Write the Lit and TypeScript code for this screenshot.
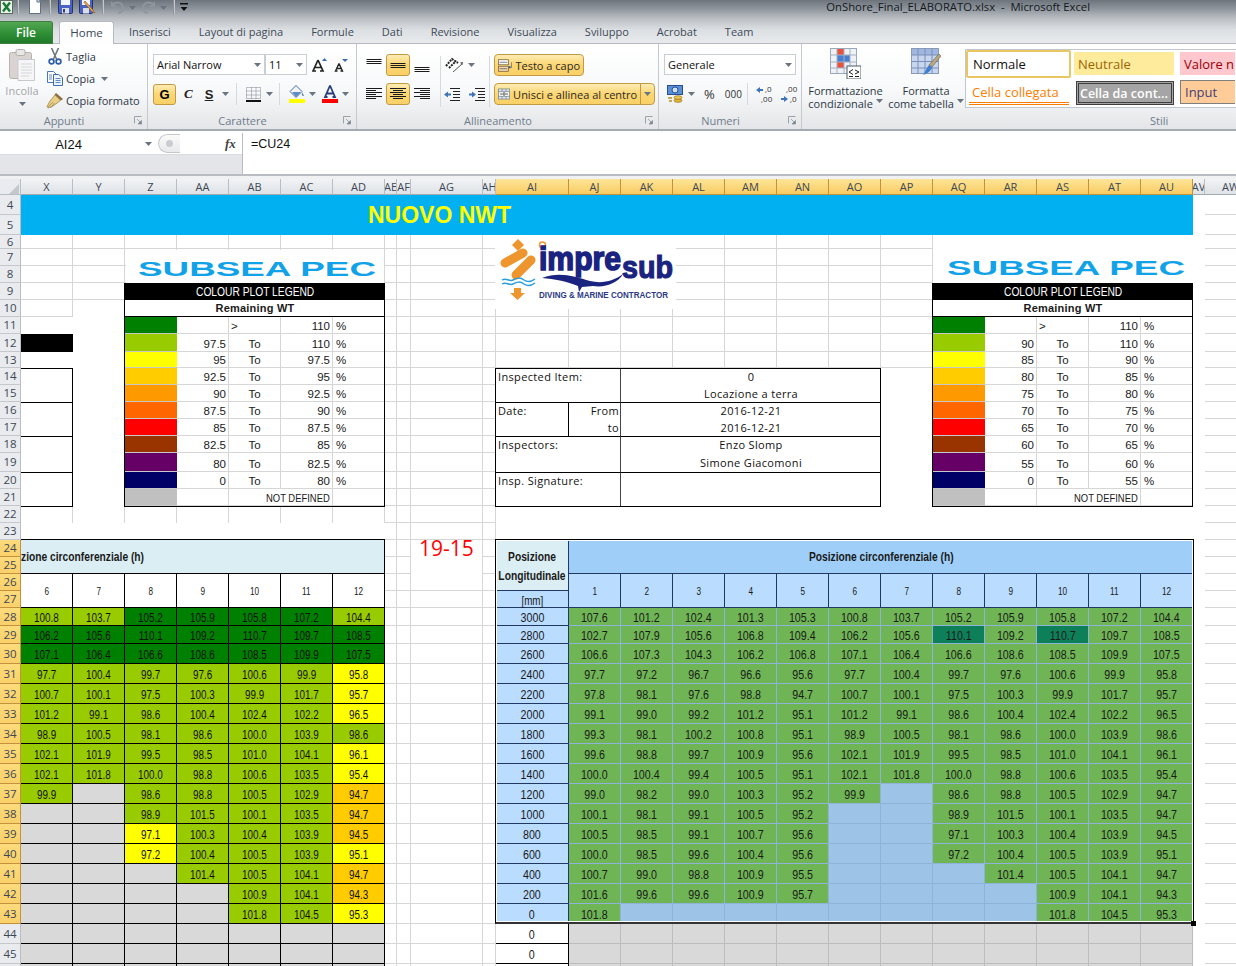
import { LitElement, html, svg, css } from "lit";
import { customElement } from "lit/decorators.js";

const COLS = ["X","Y","Z","AA","AB","AC","AD","AE","AF","AG","AH","AI","AJ","AK","AL","AM","AN","AO","AP","AQ","AR","AS","AT","AU","AV","AW"];
const C: Record<string, number> = {};
COLS.forEach((n, i) => (C[n] = i + 2));
const area = (c1: string, r1: number, c2: string = c1, r2: number = r1) =>
  `grid-area:${r1 - 2}/${C[c1]}/${r2 - 1}/${C[c2] + 1}`;

const LABELS = [3000,2800,2600,2400,2200,2000,1800,1600,1400,1200,1000,800,600,400,200,0];
const _ = "";
const DATA: string[][] = [
  ["107.6","101.2","102.4","101.3","105.3","100.8","103.7","105.2","105.9","105.8","107.2","104.4"],
  ["102.7","107.9","105.6","106.8","109.4","106.2","105.6","110.1","109.2","110.7","109.7","108.5"],
  ["106.6","107.3","104.3","106.2","106.8","107.1","106.4","106.6","108.6","108.5","109.9","107.5"],
  ["97.7","97.2","96.7","96.6","95.6","97.7","100.4","99.7","97.6","100.6","99.9","95.8"],
  ["97.8","98.1","97.6","98.8","94.7","100.7","100.1","97.5","100.3","99.9","101.7","95.7"],
  ["99.1","99.0","99.2","101.2","95.1","101.2","99.1","98.6","100.4","102.4","102.2","96.5"],
  ["99.3","98.1","100.2","100.8","95.1","98.9","100.5","98.1","98.6","100.0","103.9","98.6"],
  ["99.6","98.8","99.7","100.9","95.6","102.1","101.9","99.5","98.5","101.0","104.1","96.1"],
  ["100.0","100.4","99.4","100.5","95.1","102.1","101.8","100.0","98.8","100.6","103.5","95.4"],
  ["99.0","98.2","99.0","100.3","95.2","99.9",_,"98.6","98.8","100.5","102.9","94.7"],
  ["100.1","98.1","99.1","100.5","95.2",_,_,"98.9","101.5","100.1","103.5","94.7"],
  ["100.5","98.5","99.1","100.7","95.6",_,_,"97.1","100.3","100.4","103.9","94.5"],
  ["100.0","98.5","99.6","100.4","95.6",_,_,"97.2","100.4","100.5","103.9","95.1"],
  ["100.7","99.0","98.8","100.9","95.5",_,_,_,"101.4","100.5","104.1","94.7"],
  ["101.6","99.6","99.6","100.9","95.7",_,_,_,_,"100.9","104.1","94.3"],
  ["101.8",_,_,_,_,_,_,_,_,"101.8","104.5","95.3"],
];
const LEGEND_COLORS = ["#008000","#99cc00","#ffff00","#ffcc00","#ff9900","#ff6600","#ff0000","#993300","#660066","#000066","#c0c0c0"];
const LEFT_LEGEND: (number | null)[][] = [[null,110],[97.5,110],[95,97.5],[92.5,95],[90,92.5],[87.5,90],[85,87.5],[82.5,85],[80,82.5],[0,80]];
const RIGHT_LEGEND: (number | null)[][] = [[null,110],[90,110],[85,90],[80,85],[75,80],[70,75],[65,70],[60,65],[55,60],[0,55]];

const heat = (v: string) => {
  const n = parseFloat(v);
  if (n >= 105) return "#008000";
  if (n >= 97.5) return "#99cc00";
  if (n >= 95) return "#ffff00";
  return "#ffcc00";
};

const arrow = html`<svg class="arr" width="7" height="4" viewBox="0 0 7 4"><path d="M0 0h7L3.5 4z" fill="#6a7480"/></svg>`;
const launcher = html`<svg width="9" height="9" viewBox="0 0 9 9"><path d="M.5 .5h7M.5 .5v7" stroke="#9aa3ad" fill="none"/><path d="M3 3l4 4M7.5 4.5v3.5h-3.5z" stroke="#7f8994" fill="#7f8994" stroke-width=".7"/></svg>`;

const aligned = (ys: number[], ws: number[], align: "l" | "c" | "r") => html`<svg width="16" height="16" viewBox="0 0 16 16">${ys.map((y, i) => {
  const w = ws[i];
  const x = align === "l" ? 0 : align === "r" ? 16 - w : (16 - w) / 2;
  return svg`<rect x=${x} y=${y} width=${w} height="1" fill="#1a1a1a"></rect>`;
})}</svg>`;

const icons = {
  excel: html`<svg width="13" height="14" viewBox="0 0 13 14"><rect x=".5" y=".5" width="12" height="13" fill="#eaf4ea" stroke="#5a6a5a"/><path d="M3 2.5l7 9M10 2.5l-7 9" stroke="#1d7a36" stroke-width="2.4"/></svg>`,
  page: html`<svg width="12" height="16" viewBox="0 0 12 16"><path d="M.5 .5H8L11.500 4V15.500H.5z" fill="#fff" stroke="#5f6f86"/><path d="M8 .5V4h3.500" fill="#cfd9e6" stroke="#5f6f86"/></svg>`,
  save: html`<svg width="15" height="16" viewBox="0 0 15 16"><rect x=".5" y=".5" width="14" height="15" rx="1" fill="#4a62c4" stroke="#26336f"/><rect x="3" y="1" width="9" height="6" fill="#f2f5fb"/><rect x="4" y="10" width="7" height="5.500" fill="#d9dde6"/><rect x="5" y="11" width="2" height="3.500" fill="#33406f"/></svg>`,
  saveas: html`<svg width="17" height="16" viewBox="0 0 17 16"><rect x=".5" y=".5" width="13" height="15" rx="1" fill="#4a62c4" stroke="#26336f"/><rect x="3" y="1" width="8" height="6" fill="#f2f5fb"/><rect x="4" y="10" width="6" height="5.500" fill="#d9dde6"/><path d="M6 3l8 9 2 3-3-1.500-8-9z" fill="#e6b34a" stroke="#9a5a2a" stroke-width=".7"/></svg>`,
  undo: html`<svg width="15" height="14" viewBox="0 0 15 14"><path d="M2 5c4-4 10-3 11 2 .5 3-2 6-5 6" fill="none" stroke="#8e959c" stroke-width="2"/><path d="M1 1v6h6z" fill="#8e959c"/></svg>`,
  redo: html`<svg width="15" height="14" viewBox="0 0 15 14"><path d="M13 5C9 1 3 2 2 7c-.5 3 2 6 5 6" fill="none" stroke="#8e959c" stroke-width="2"/><path d="M14 1v6H8z" fill="#8e959c"/></svg>`,
  qat: html`<svg width="8" height="10" viewBox="0 0 8 10"><rect y="1" width="8" height="1.500" fill="#111"/><path d="M.5 5h7L4 9z" fill="#111"/></svg>`,
  clipboard: html`<svg width="26" height="32" viewBox="0 0 26 32"><rect x=".5" y="3.500" width="22" height="26" rx="2" fill="#d9d4d2" stroke="#b7b2b0"/><rect x="7" y=".5" width="9" height="6" rx="1.500" fill="#e9e7e6" stroke="#b3aeac"/><path d="M9 10.500h16.500V31.500H9z" fill="#f6f6f7" stroke="#c6c9ce"/><path d="M12 15h11M12 18h11M12 21h11M12 24h11M12 27h8" stroke="#d2d6db"/></svg>`,
  scissors: html`<svg width="14" height="17" viewBox="0 0 14 17"><path d="M3.500 0l5 11M10.500 0l-5 11" stroke="#6c7681" stroke-width="1.600"/><circle cx="3.500" cy="13.500" r="2.400" fill="none" stroke="#2f5ea8" stroke-width="1.700"/><circle cx="10.500" cy="13.500" r="2.400" fill="none" stroke="#2f5ea8" stroke-width="1.700"/></svg>`,
  copy: html`<svg width="16" height="15" viewBox="0 0 16 15"><path d="M.5 .5h6l3 3v8H.5z" fill="#fff" stroke="#4a78b5"/><path d="M6.500 3.500h5l4 3v8h-9z" fill="#eef4fb" stroke="#3f6dac"/><path d="M8.500 7.500h5M8.500 9.500h5M8.500 11.500h5M2 4h3M2 6h3M2 8h3" stroke="#5f8bc4"/></svg>`,
  brush: html`<svg width="18" height="17" viewBox="0 0 18 17"><path d="M10 1l7 6-2 1.500-6.500-6z" fill="#8a6e3e"/><path d="M9 3l5.500 5.500L7 14 2 16 1 14.500 4 9z" fill="#e8cf84" stroke="#8f7a45" stroke-width=".7"/><path d="M2 15l5-5M4.500 16l4-5" stroke="#a98f4e" stroke-width=".8"/></svg>`,
  bigA: html`<svg width="15" height="15" viewBox="0 0 15 15"><path d="M6 3L1 14h3M6 3l5 11H8M3.200 10.500h5.600" fill="none" stroke="#222" stroke-width="1.700"/><path d="M10 4l2.500-3L15 4z" fill="#3a6cb0"/></svg>`,
  smallA: html`<svg width="14" height="14" viewBox="0 0 14 14"><path d="M5 5.500L1.500 13H3.500M5 5.500L8.500 13H6.500M3 10.500h4" fill="none" stroke="#222" stroke-width="1.400"/><path d="M8 1h6l-3 3z" fill="#3a6cb0"/></svg>`,
  borders: html`<svg width="15" height="15" viewBox="0 0 15 15"><path d="M.5 .5h14v11H.5zM5.500 .5v11M10 .5v11M.5 4h14M.5 8h14" fill="none" stroke="#7d858f" stroke-dasharray="1 1"/><rect y="13" width="15" height="2" fill="#111"/></svg>`,
  fill: html`<svg width="16" height="18" viewBox="0 0 16 18"><path d="M7 .5l6 6-6 6-6-6z" fill="#f2f4f7" stroke="#4a6a9a"/><path d="M3 7h9l-5 5z" fill="#5b8cc8"/><path d="M13 7.500c1.500 2 2 3 1.500 3.500s-2-.5-1.500-3.500z" fill="#4677b7"/><rect y="14" width="16" height="4" fill="#ffff00"/></svg>`,
  colorA: html`<svg width="16" height="18" viewBox="0 0 16 18"><path d="M8 .5L3 12h2.500M8 .5L13 12h-2.500M4.500 8.500h7" fill="none" stroke="#2a3f7a" stroke-width="1.800"/><rect y="14" width="16" height="4" fill="#ff0000"/></svg>`,
  orient: html`<svg width="24" height="16" viewBox="0 0 24 16"><path d="M2 9l6-7 6 4M5 11l7-7" fill="none" stroke="#222" stroke-width="2" stroke-dasharray="2 1"/><path d="M9 15l9-8" stroke="#555"/><path d="M19 5l-3 .5 2.500 2.500z" fill="#555"/></svg>`,
  indentL: html`<svg width="17" height="17" viewBox="0 0 17 17"><path d="M6 2.500h10M9 5.500h7M9 8.500h7M9 11.500h7M6 14.500h10" stroke="#222"/><path d="M0 8.500l4-3v2h3v2H4v2z" fill="#3f74bb"/></svg>`,
  indentR: html`<svg width="17" height="17" viewBox="0 0 17 17"><path d="M7 2.500h10M10 5.500h7M10 8.500h7M10 11.500h7M7 14.500h10" stroke="#222"/><path d="M8 8.500l-4-3v2H1v2h3v2z" fill="#3f74bb"/></svg>`,
  wrap: html`<svg width="20" height="17" viewBox="0 0 20 17"><rect x=".5" y=".5" width="14" height="7" fill="#fbfbfb" stroke="#6d5a3a"/><rect x=".5" y="9.500" width="14" height="7" fill="#f4d6ae" stroke="#6d5a3a"/><path d="M2 4h11M2 13h11" stroke="#555"/><path d="M19 4v7h-3" fill="none" stroke="#35558a"/><path d="M17 9l-3 2 3 2z" fill="#35558a"/></svg>`,
  merge: html`<svg width="18" height="16" viewBox="0 0 18 16"><rect x=".5" y=".5" width="17" height="15" fill="#dfe6ee" stroke="#6b7a8a"/><rect x="2" y="5" width="14" height="6" fill="#fff"/><path d="M.5 4.500h17M.5 11.500h17M6 .5v4M12 .5v4M6 11.500v4M12 11.500v4" stroke="#6b7a8a"/><path d="M3 8h3M15 8h-3" stroke="#111"/><circle cx="9" cy="8" r="1.800" fill="none" stroke="#111"/></svg>`,
  accounting: html`<svg width="17" height="18" viewBox="0 0 17 18"><rect x=".5" y=".5" width="15" height="9" fill="#5a8fd6" stroke="#2a4f90"/><circle cx="8" cy="5" r="3" fill="#cfe0f5" stroke="#2a4f90"/><ellipse cx="11" cy="15.500" rx="4" ry="1.800" fill="#e8b93a" stroke="#8f6a1a" stroke-width=".7"/><ellipse cx="11" cy="12.500" rx="4" ry="1.800" fill="#f1c94d" stroke="#8f6a1a" stroke-width=".7"/><path d="M1 13h4M2 16h3" stroke="#b58f25" stroke-width="1.500"/></svg>`,
  condfmt: html`<svg width="31" height="31" viewBox="0 0 31 31"><rect x=".5" y=".5" width="26" height="25" fill="#eef1f6" stroke="#9aa8bd"/><rect x="7" y="1" width="7" height="6" fill="#e8513c"/><rect x="7" y="7" width="13" height="7" fill="#4a7fd0"/><rect x="7" y="14" width="7" height="6" fill="#e8513c"/><path d="M7 .5v25M14 .5v25M20 .5v25M.5 7h26M.5 14h26M.5 20h26" stroke="#a4b1c4" fill="none"/><rect x="17" y="18" width="14" height="13" fill="#fff" stroke="#515c6a"/><path d="M19 24l4-2.500M19 24l4 2.500M19 28.500h4M25 22l4 2-4 2M25 28.500h4" stroke="#222" fill="none"/></svg>`,
  tablefmt: html`<svg width="31" height="31" viewBox="0 0 31 31"><rect x=".5" y=".5" width="27" height="25" fill="#c7d5ef" stroke="#8a9bb7"/><rect x="1" y="1" width="26" height="6" fill="#9fb6e0"/><path d="M7 .5v25M14 .5v25M21 .5v25M.5 7h27M.5 13.500h27M.5 20h27" stroke="#7a8fb5" fill="none"/><path d="M28 6l2 2-9 11-3-2z" fill="#b8a882" stroke="#6d6144" stroke-width=".6"/><path d="M18 17l3 2c-1 4-4 6-9 8 2-3 3-6 6-10z" fill="#3f7fd2"/></svg>`,
};

const ROW_HEIGHTS = [20,20,14,17,17,17,17,17,18,16,17,17,17,17,17,19,17,17,17,17,17,17,17,17,18,18,20,20,20,20,20,20,20,20,20,20,20,20,20,20,20,20,20];

@customElement("app-root")
export class AppRoot extends LitElement {
  static styles = css`
    :host { display:block; width:1236px; height:966px; overflow:hidden; background:#fff;
      font-family:"Open Sans","Noto Sans",sans-serif; font-size:11px; color:#2d3846; }
    .top { height:44px; display:flex; flex-direction:column;
      background:linear-gradient(#6d747c 0,#8e959c 9px,#b9bdc2 18px,#dde0e3 30px,#e8eaec 44px); }
    .qat { height:14px; display:flex; align-items:flex-end; overflow:hidden; flex:none; }
    .qat svg { flex:none; }
    .qsep { width:1px; height:17px; background:#8a9097; box-shadow:1px 0 #c4c8cc; margin:0 8px; flex:none; }
    .qarr { margin:0 5px 4px 4px; display:flex; }
    .title { margin-left:auto; margin-right:146px; font-size:11.300px; line-height:14px; color:#14181c; white-space:pre; align-self:center; }
    .tabs { flex:1; display:flex; align-items:flex-end; border-bottom:1px solid #b6bbc1; }
    .file { width:53px; height:23px; margin-bottom:-1px; display:flex; align-items:center; justify-content:center; color:#fff; font-weight:600; font-size:12px;
      background:linear-gradient(#53a653,#2f8f36 55%,#1f7a29); border-radius:0 3px 0 0; border:1px solid #3c7f3f; border-left:0; box-sizing:border-box; }
    .home { width:55px; height:23px; margin:0 0 -1px 6px; padding-bottom:1px; display:flex; align-items:center; justify-content:center; font-size:11.500px; color:#3a4655;
      background:linear-gradient(#fff,#fdfdfd); border:1px solid #b6bbc1; border-bottom:0; border-radius:3px 3px 0 0; box-sizing:border-box; z-index:1; }
    .tablist { display:flex; gap:28px; margin-left:15px; height:23px; align-items:center; color:#3e4a58; font-size:11px; white-space:nowrap; }

    .ribbon { display:flex; background:linear-gradient(#fff 0,#f8f9fa 45px,#e3e5e8 85px); border-bottom:2px solid #a5abb2; box-sizing:border-box; height:87px; }
    .group { display:flex; flex-direction:column; border-right:1px solid #c6cace; box-sizing:border-box; flex:none; }
    .body { flex:1; display:flex; min-height:0; }
    .glabel { height:18px; display:flex; align-items:center; justify-content:flex-end; color:#6f7c8c; padding-right:4px; }
    .glabel span { flex:1; text-align:center; padding-right:6px; }
    .paste { width:44px; display:flex; flex-direction:column; align-items:center; padding-top:5px; color:#a3a6aa; flex:none; }
    .paste .lbl { margin-top:3px; line-height:14px; }
    .paste .arr { margin-top:4px; }
    .clips { display:flex; flex-direction:column; padding:2px 0 0 2px; }
    .clip { height:22px; display:flex; align-items:center; gap:2px; white-space:nowrap; color:#2d3846; }
    .clip svg:first-child { width:18px; }
    .clip .arr { margin-left:4px; }

    .fontg .body { flex-direction:column; padding:10px 0 0 5px; gap:8px; }
    .row { display:flex; align-items:center; height:21px; }
    .select { height:21px; box-sizing:border-box; background:#fff; border:1px solid #c9ced4; display:flex; align-items:center; justify-content:space-between; padding:0 3px; color:#111; }
    .hl { background:linear-gradient(#fdecb4,#fbd672 50%,#fad067); border:1px solid #c39a44; border-radius:3px; box-sizing:border-box; }
    .gbtn { width:23px; height:21px; display:flex; align-items:center; justify-content:center; font:700 13px "Liberation Sans",sans-serif; color:#000; }
    .ch { font:700 13px "Liberation Sans",sans-serif; color:#222; }
    .ch.it { font:italic 700 13px "Liberation Serif",serif; }
    .ch.un { text-decoration:underline; }
    .ic { display:flex; flex:none; }
    .vsep { width:1px; background:#d6d9dd; flex:none; align-self:stretch; }

    .aligng .body { padding-top:10px; }
    .acol { display:flex; flex-direction:column; gap:7px; }
    .arow { display:flex; height:22px; align-items:center; }
    .abox { width:24px; height:22px; display:flex; align-items:center; justify-content:center; flex:none; }
    .btn2 { height:22px; display:flex; align-items:center; gap:3px; padding:0 3px; white-space:nowrap; color:#2a2a2a; font-size:11px; border-radius:4px; }
    .split { border-left:1px solid #c39a44; height:100%; display:flex; align-items:center; padding-left:3px; }
    .numg .body { flex-direction:column; padding:10px 0 0 5px; gap:8px; }
    .big { display:flex; flex-direction:column; align-items:center; flex:none; text-align:center; line-height:13px; padding-top:4px; color:#2d3846; white-space:nowrap; }
    .big svg:first-child { margin-bottom:5px; }
    .gal { width:271px; height:59px; margin:5px 0 0 0; border:1px solid #c2c7cd; border-right:0; box-sizing:border-box; background:#fff;
      display:grid; grid-template-columns:108px 106px 55px; grid-template-rows:28px 28px; white-space:nowrap; font-size:13px; overflow:hidden; }
    .st { display:flex; align-items:center; padding-left:4px; box-sizing:border-box; overflow:hidden; }
    .st-normal { margin:0 3px 0 0; border:2px solid #eac663; border-radius:2px; background:#fff; color:#111; padding-left:5px; }
    .st-neut { margin:2px 6px 3px 0; background:#ffeb9c; color:#9c6500; }
    .st-bad { margin:2px 0 3px 0; background:#ffc7ce; color:#9c0006; }
    .st-link { margin:3px 5px 1px 3px; color:#fa7d00; border-bottom:3px double #fa7d00; padding-left:3px; }
    .st-check { margin:3px 6px 1px 2px; background:#a5a5a5; color:#fff; font-weight:600; border:3px double #3f3f3f; padding-left:1px; font-size:12.500px; }
    .st-input { margin:2px 0 2px 0; background:#ffcc99; color:#3f3f76; border:1px solid #7f7f7f; border-right:0; }

    .fbar { height:43px; display:flex; font:12px "Liberation Sans",sans-serif; color:#111; border-bottom:2px solid #b9bdc2; box-sizing:border-box; margin-top:2px; }
    .fleft { width:243px; flex:none; display:flex; flex-direction:column; background:#e3e5e8; border-right:1px solid #b9bdc2; box-sizing:border-box; }
    .ftop { height:22px; display:flex; align-items:center; background:#fff; border-bottom:1px solid #d8dbdf; box-sizing:border-box; }
    .name { width:137px; text-align:center; font-size:13px; padding-top:2px; margin-right:8px; }
    .pill { width:22px; height:19px; border:1px solid #c3c7cc; border-right:0; border-radius:10px 0 0 10px; margin-left:6px; background:linear-gradient(#fafafa,#e8eaec); display:flex; align-items:center; justify-content:center; box-sizing:border-box; }
    .dot { width:7px; height:7px; border-radius:50%; background:#c9cdd2; }
    .fx { margin-left:45px; font:italic 700 13px "Liberation Serif",serif; color:#444; }
    .finput { padding:4px 0 0 8px; font-size:12.500px; }
    .gap { height:3px; background:#f0f1f3; }

    .sheet { position:relative; display:grid; width:1257px; font:13px "Liberation Sans",sans-serif; color:#1a1a1a;
      grid-template-columns:21px repeat(7,52px) 12px 14px 72px 13px 73px repeat(12,52px) 12px 52px; }
    .sheet > * { box-sizing:border-box; min-width:0; min-height:0; }
    .nar { display:inline-block; transform:scaleX(.82); white-space:nowrap; }
    .nar.l { transform-origin:left center; }
    .nar.r { transform-origin:right center; }
    .nar.s { transform:scaleX(.76); }
    .corner { background:#e9ebee; border-right:1px solid #b9bec4; border-bottom:1px solid #b9bec4; }
    .corner svg { display:block; margin:5px 0 0 9px; }
    .ch-h { background:linear-gradient(#f1f3f5,#dfe2e6); border-right:1px solid #b9bec4; border-bottom:1px solid #a3a9b0; display:flex; align-items:center; justify-content:center;
      font:11px "Open Sans",sans-serif; color:#3d4854; overflow:hidden; white-space:nowrap; }
    .ch-h.sel { background:linear-gradient(#fde598,#f9cc62); border-right:1px solid #c4923d; border-bottom:1px solid #c4923d; }
    .rh { background:#e9ebee; border-right:1px solid #b9bec4; border-bottom:1px solid #c4c8cd; display:flex; align-items:center; justify-content:center; font:11.500px "Open Sans",sans-serif; color:#3d4854; overflow:hidden; line-height:1; }
    .rh.sel { background:linear-gradient(#fddb7c,#fbd06a); border-right:1px solid #c4923d; border-bottom:1px solid #c4923d; }
    .g { border-right:1px solid #d6d6d6; border-bottom:1px solid #d6d6d6; }
    .g.nb { border-bottom:0; }
    .w { background:#fff; }
    .band { background:#00b0f0; color:#ffff00; font:700 23px "Liberation Sans",sans-serif; display:flex; align-items:center; padding-left:347px; white-space:nowrap; }
    .blk { background:#000; }
    .xbox { background:#fff; border:1px solid #000; border-left:0; margin-bottom:-1px; }
    .lh { background:#000; color:#fff; display:flex; align-items:center; justify-content:center; font-size:12.500px; }
    .ls { background:#fff; display:flex; align-items:center; justify-content:center; font:700 11px "Liberation Sans",sans-serif; border-bottom:1px solid #000; letter-spacing:.2px; }
    .lc { border-bottom:1px solid #c8c8c8; }
    .lv { background:#fff; border-right:1px solid #d6d6d6; border-bottom:1px solid #d6d6d6; display:flex; align-items:flex-end; line-height:14px; font-size:11.500px; padding:0 2px; white-space:nowrap; overflow:hidden; }
    .lv.r { justify-content:flex-end; padding-right:2px; }
    .lv.c { justify-content:center; }
    .lv.p { padding-left:3px; }
    .frame { border:1px solid #000; margin:0 0 -1px -1px; pointer-events:none; }
    .info { background:#fff; display:flex; align-items:center; padding:0 2px; font:11px "Open Sans",sans-serif; white-space:nowrap; color:#111; letter-spacing:.35px; }
    .info.t { border-top:1px solid #000; align-items:flex-start; }
    .info.c { justify-content:center; border-left:1px solid #444; margin-left:-1px; }
    .info.b { border-top:1px solid #000; padding-bottom:1px; }
    .info.r { justify-content:flex-end; }
    .info.dr { border-right:1px solid #000; }
    .red { color:#ff0000; font:21px "Open Sans",sans-serif; line-height:17px; display:flex; align-items:flex-start; justify-content:center; background:#fff; border-right:1px solid #d6d6d6; white-space:nowrap; }
    .hdr { background:#daeef3; border:1px solid #000; border-left:0; margin-top:-1px; display:flex; align-items:center; font-weight:700; font-size:12.500px; white-space:nowrap; overflow:hidden; }
    .hn { background:#fff; border-right:1px solid #000; border-bottom:1px solid #000; display:flex; align-items:center; justify-content:center; font-size:10px; padding-top:1px; }
    .v { border-right:1px solid #000; border-bottom:1px solid #000; display:flex; align-items:center; justify-content:center; color:#111; padding-top:1px; }
    .gray { background:#d9d9d9; }
    .pl { background:#daeef3; border-right:1px solid #1f3864; border-bottom:1px solid #1f3864; display:flex; align-items:center; justify-content:center; text-align:center; font-weight:700; font-size:12.500px; line-height:19px; padding-top:3px; }
    .pmm { background:#b9dcff; border-right:1px solid #1f3864; border-bottom:1px solid #1f3864; display:flex; align-items:center; justify-content:center; font-size:12px; padding-top:3px; }
    .ph { background:#9fcff8; border-bottom:1px solid #1f3864; display:flex; align-items:center; justify-content:center; font-weight:700; font-size:12.500px; }
    .pn { background:#b9dcff; border-right:1px solid #1f3864; border-bottom:1px solid #1f3864; display:flex; align-items:center; justify-content:center; font-size:10px; padding-top:1px; }
    .ps { background:#b9dcff; border-right:1px solid #1f3864; border-bottom:1px solid #1f3864; display:flex; align-items:center; justify-content:center; padding-top:1px; }
    .d { background:#6fb555; border-right:1px solid #8db4d6; border-bottom:1px solid #8db4d6; display:flex; align-items:center; justify-content:center; padding-top:1px; }
    .d.e { background:#9dc3e6; }
    .d.x { background:#0e8059; }
    .z { background:#fff; border-right:1px solid #000; border-bottom:1px solid #000; display:flex; align-items:center; justify-content:center; padding-top:1px; }
    .zg { background:#d9d9d9; border-right:1px solid #bdbdbd; border-bottom:1px solid #bdbdbd; }
    .dframe { border:1px solid #000; box-shadow:inset 0 0 0 1px #fff; margin:-1px -1px 0 -1px; border-bottom:2px solid #333; position:relative; pointer-events:none; }
    .handle { position:absolute; right:-3px; bottom:-4px; width:5px; height:5px; background:#000; }
    .pic { position:absolute; background:#fff; }
    .pic svg { display:block; }
  `;

  private grid() {
    const out: unknown[] = [];
    for (let r = 4; r <= 46; r++) {
      for (const c of COLS) {
        const leftHead = C[c] <= C.AD;
        out.push(html`<div class="g ${leftHead && r === 22 ? "nb" : ""}" style=${area(c, r)}></div>`);
      }
    }
    return out;
  }

  private legend(cs: string[], vals: (number | null)[][]) {
    const [c0, c1, c2, c3, c4] = cs;
    return html`
      <div class="lh" style=${area(c0, 9, c4)}><span class="nar">COLOUR PLOT LEGEND</span></div>
      <div class="ls" style=${area(c0, 10, c4)}>Remaining WT</div>
      ${LEGEND_COLORS.map((col, i) => html`<div class="lc" style="${area(c0, 11 + i)};background:${col}"></div>`)}
      ${vals.map((v, i) => {
        const r = 11 + i;
        return v[0] === null
          ? html`<div class="lv" style=${area(c1, r)}></div><div class="lv" style=${area(c2, r)}>&gt;</div>`
          : html`<div class="lv r" style=${area(c1, r)}>${v[0]}</div><div class="lv c" style=${area(c2, r)}>To</div>`;
      })}
      ${vals.map((v, i) => html`<div class="lv r" style=${area(c3, 11 + i)}>${v[1]}</div><div class="lv p" style=${area(c4, 11 + i)}>%</div>`)}
      <div class="lv" style=${area(c1, 21)}></div>
      <div class="lv r" style=${area(c2, 21, c3)}><span class="nar r">NOT DEFINED</span></div>
      <div class="lv" style=${area(c4, 21)}></div>
      <div class="frame" style=${area(c0, 9, c4, 21)}></div>
    `;
  }

  private leftTable() {
    const cs = ["X","Y","Z","AA","AB","AC","AD"];
    return html`
      <div class="hdr" style=${area("X", 24, "AD", 25)}><span class="nar l">zione circonferenziale (h)</span></div>
      ${cs.map((c, i) => html`<div class="hn" style=${area(c, 26, c, 27)}><span class="nar">${i + 6}</span></div>`)}
      ${DATA.map((row, ri) => cs.map((c, i) => {
        const v = row[i + 5];
        return html`<div class="v ${v ? "" : "gray"}" style="${area(c, 28 + ri)}${v ? `;background:${heat(v)}` : ""}"><span class="nar s">${v}</span></div>`;
      }))}
      ${[44, 45, 46].map((r) => cs.map((c) => html`<div class="v gray" style=${area(c, r)}></div>`))}
    `;
  }

  private rightTable() {
    const cs = COLS.slice(COLS.indexOf("AJ"), COLS.indexOf("AU") + 1);
    return html`
      <div class="pl" style=${area("AI", 24, "AI", 26)}><span class="nar">Posizione<br />Longitudinale</span></div>
      <div class="pmm" style=${area("AI", 27)}><span class="nar">[mm]</span></div>
      <div class="ph" style=${area("AJ", 24, "AU", 25)}><span class="nar">Posizione circonferenziale (h)</span></div>
      ${cs.map((c, i) => html`<div class="pn" style=${area(c, 26, c, 27)}><span class="nar">${i + 1}</span></div>`)}
      ${LABELS.map((l, ri) => html`<div class="ps" style=${area("AI", 28 + ri)}><span class="nar">${l}</span></div>`)}
      ${DATA.map((row, ri) => cs.map((c, i) => {
        const v = row[i];
        const cls = !v ? "e" : parseFloat(v) >= 110 ? "x" : "";
        return html`<div class="d ${cls}" style=${area(c, 28 + ri)}><span class="nar">${v}</span></div>`;
      }))}
      ${[44, 45, 46].map((r) => html`<div class="z" style=${area("AI", r)}><span class="nar">0</span></div>${cs.map((c) => html`<div class="zg" style=${area(c, r)}></div>`)}`)}
      <div class="dframe" style=${area("AI", 24, "AU", 43)}><div class="handle"></div></div>
    `;
  }

  private infoBox() {
    return html`
      <div class="info t" style=${area("AI", 14, "AJ", 15)}>Inspected Item:</div>
      <div class="info c t" style=${area("AK", 14, "AO", 14)}>0</div>
      <div class="info c" style=${area("AK", 15, "AO", 15)}>Locazione a terra</div>
      <div class="info t dr" style=${area("AI", 16, "AI", 17)}>Date:</div>
      <div class="info r b" style=${area("AJ", 16)}>From</div>
      <div class="info r" style=${area("AJ", 17)}>to</div>
      <div class="info c b" style=${area("AK", 16, "AO", 16)}>2016-12-21</div>
      <div class="info c" style=${area("AK", 17, "AO", 17)}>2016-12-21</div>
      <div class="info t" style=${area("AI", 18, "AJ", 19)}>Inspectors:</div>
      <div class="info c b" style=${area("AK", 18, "AO", 18)}>Enzo Slomp</div>
      <div class="info c" style=${area("AK", 19, "AO", 19)}>Simone Giacomoni</div>
      <div class="info t" style=${area("AI", 20, "AJ", 21)}>Insp. Signature:</div>
      <div class="info c b" style=${area("AK", 20, "AO", 21)}></div>
      <div class="frame" style=${area("AI", 14, "AO", 21)}></div>
    `;
  }

  private subsea(left: number, top: number, w: number, h: number, tx: number, ty: number) {
    return html`<div class="pic" style="left:${left}px;top:${top}px;width:${w}px;height:${h}px">
      <svg width=${w} height=${h}>
        <text x=${tx} y=${ty} textLength="238" lengthAdjust="spacingAndGlyphs" font-family="Liberation Sans" font-weight="700" font-size="21" fill="#12a2e8">SUBSEA PEC</text>
      </svg></div>`;
  }

  private impresub() {
    return html`<div class="pic" style="left:495px;top:56px;width:181px;height:74px">
      <svg width="181" height="74" viewBox="0 0 181 74">
        <path d="M23 4l6 6-6 6-6-6z" fill="#ee952d"/>
        <path d="M10 28L28 18" stroke="#ee952d" stroke-width="9" stroke-linecap="round"/>
        <path d="M36 25L21 40" stroke="#ee952d" stroke-width="9" stroke-linecap="round"/>
        <path d="M7 45c4-3 7 2 11 0s7-3 11 0 7 2 11-1M7 49c4-3 7 2 11 0s7-3 11 0 7 2 11-1" fill="none" stroke="#2c9fd8" stroke-width="1.500"/>
        <path d="M15 58l7.500 7 7.500-7h-4v-5h-7v5z" fill="#ee952d"/>
        <circle cx="47.500" cy="10" r="3" fill="none" stroke="#ee952d" stroke-width="1.500"/>
        <text x="44" y="35" textLength="82" lengthAdjust="spacingAndGlyphs" font-family="Liberation Sans" font-weight="700" font-size="34" fill="#1a2380" stroke="#1a2380" stroke-width="1.600">impre</text>
        <text x="127" y="43" textLength="51" lengthAdjust="spacingAndGlyphs" font-family="Liberation Sans" font-weight="700" font-size="32" fill="#1a2380" stroke="#1a2380" stroke-width="1.200">sub</text>
        <path d="M47 43C65 36 80 42 95 46c12 3 24 0 33-7-5 9-18 14-30 12l-11 1-3 5-1-6C70 46 60 44 47 43z" fill="#1a2380"/>
        <text x="44" y="63" textLength="129" lengthAdjust="spacingAndGlyphs" font-family="Liberation Sans" font-weight="700" font-size="8.500" fill="#2b3a85">DIVING &amp; MARINE CONTRACTOR</text>
      </svg></div>`;
  }

  private sheetView() {
    const heads = [
      html`<div class="corner" style="grid-area:1/1"><svg width="10" height="10" viewBox="0 0 10 10"><path d="M10 0v10H0z" fill="#c3c8ce"/></svg></div>`,
      ...COLS.map((c) => html`<div class="ch-h ${C[c] >= C.AI && C[c] <= C.AU ? "sel" : ""}" style="grid-area:1/${C[c]}">${c}</div>`),
    ];
    const rows = ROW_HEIGHTS.map((_h, i) => {
      const r = i + 4;
      return html`<div class="rh ${r >= 24 && r <= 43 ? "sel" : ""}" style="grid-area:${r - 2}/1">${r}</div>`;
    });
    const tmpl = "16px " + ROW_HEIGHTS.map((h) => h + "px").join(" ");
    return html`<div class="sheet" style="grid-template-rows:${tmpl}">
      ${heads}${rows}${this.grid()}
      <div class="w" style=${area("AV", 4, "AV", 46)}></div>
      <div class="band" style=${area("X", 4, "AU", 5)}>NUOVO NWT</div>
      <div class="w" style=${area("Y", 10, "Y", 21)}></div>
      <div class="w" style=${area("X", 11)}></div>
      <div class="blk" style=${area("X", 12)}></div>
      <div class="w" style=${area("X", 13)}></div>
      <div class="xbox" style=${area("X", 14, "X", 15)}></div>
      <div class="xbox" style=${area("X", 16, "X", 17)}></div>
      <div class="xbox" style=${area("X", 18, "X", 19)}></div>
      <div class="xbox" style=${area("X", 20, "X", 21)}></div>
      <div class="w" style=${area("X", 23, "AD", 23)}></div>
      <div class="w" style=${area("AI", 22, "AU", 23)}></div>
      <div class="w" style=${area("AP", 14, "AP", 21)}></div>
      ${this.legend(["Z","AA","AB","AC","AD"], LEFT_LEGEND)}
      ${this.legend(["AQ","AR","AS","AT","AU"], RIGHT_LEGEND)}
      ${this.infoBox()}
      <div class="red" style=${area("AG", 24, "AG", 25)}>19-15</div>
      ${this.leftTable()}
      ${this.rightTable()}
      ${this.subsea(126, 71, 258, 33, 12, 25.8)}
      ${this.subsea(933, 56, 260, 48, 14, 40)}
      ${this.impresub()}
    </div>`;
  }

  private ribbon() {
    const tl = aligned([2, 4, 6], [15, 15, 15], "c");
    const ml = aligned([6, 8, 10], [15, 15, 15], "c");
    const bl = aligned([10, 12, 14], [15, 15, 15], "c");
    const ys = [2, 4, 6, 8, 10, 12];
    const lw = [16, 10, 16, 10, 16, 10];
    return html`<div class="ribbon">
      <div class="group" style="width:148px">
        <div class="body">
          <div class="paste">${icons.clipboard}<span class="lbl">Incolla</span>${arrow}</div>
          <div class="clips">
            <div class="clip">${icons.scissors}<span>Taglia</span></div>
            <div class="clip">${icons.copy}<span>Copia</span>${arrow}</div>
            <div class="clip">${icons.brush}<span>Copia formato</span></div>
          </div>
        </div>
        <div class="glabel"><span>Appunti</span>${launcher}</div>
      </div>

      <div class="group fontg" style="width:209px">
        <div class="body">
          <div class="row">
            <div class="select" style="width:112px"><span>Arial Narrow</span>${arrow}</div>
            <div class="select" style="width:42px"><span>11</span>${arrow}</div>
            <span class="ic" style="margin-left:5px">${icons.bigA}</span>
            <span class="ic" style="margin-left:7px">${icons.smallA}</span>
          </div>
          <div class="row" style="height:22px">
            <div class="hl gbtn">G</div>
            <span class="ch it" style="margin-left:8px">C</span>
            <span class="ch un" style="margin-left:12px">S</span>
            <span class="ic" style="margin-left:9px">${arrow}</span>
            <div class="vsep" style="margin-left:7px"></div>
            <span class="ic" style="margin-left:9px">${icons.borders}</span>
            <span class="ic" style="margin-left:5px">${arrow}</span>
            <div class="vsep" style="margin-left:6px"></div>
            <span class="ic" style="margin-left:9px">${icons.fill}</span>
            <span class="ic" style="margin-left:4px">${arrow}</span>
            <span class="ic" style="margin-left:6px">${icons.colorA}</span>
            <span class="ic" style="margin-left:4px">${arrow}</span>
          </div>
        </div>
        <div class="glabel"><span>Carattere</span>${launcher}</div>
      </div>

      <div class="group aligng" style="width:302px">
        <div class="body">
          <div class="acol" style="padding-left:5px">
            <div class="arow"><div class="abox">${tl}</div><div class="abox hl">${ml}</div><div class="abox">${bl}</div></div>
            <div class="arow">
              <div class="abox">${aligned(ys, lw, "l")}</div>
              <div class="abox hl">${aligned(ys, lw, "c")}</div>
              <div class="abox">${aligned(ys, lw, "r")}</div>
            </div>
          </div>
          <div class="vsep" style="margin:2px 0 4px 6px"></div>
          <div class="acol" style="padding-left:3px;width:48px;box-sizing:border-box">
            <div class="arow">${icons.orient}<span class="ic">${arrow}</span></div>
            <div class="arow" style="gap:7px">${icons.indentL}${icons.indentR}</div>
          </div>
          <div class="vsep" style="margin:2px 0 4px 0"></div>
          <div class="acol" style="padding-left:4px">
            <div class="btn2 hl" style="width:90px">${icons.wrap}<span>Testo a capo</span></div>
            <div class="btn2 hl" style="width:161px;padding-right:0">${icons.merge}<span style="flex:1">Unisci e allinea al centro</span><span class="split">${arrow}&nbsp;</span></div>
          </div>
        </div>
        <div class="glabel"><span>Allineamento</span>${launcher}</div>
      </div>

      <div class="group numg" style="width:143px">
        <div class="body">
          <div class="row"><div class="select" style="width:132px"><span>Generale</span>${arrow}</div></div>
          <div class="row" style="height:22px;padding-left:3px">
            ${icons.accounting}
            <span class="ic" style="margin-left:4px">${arrow}</span>
            <span style="margin-left:9px;font-size:13px;color:#333">%</span>
            <span style="margin-left:10px;font-size:10px;color:#333">000</span>
            <div class="vsep" style="margin-left:5px"></div>
            <svg style="margin-left:8px;overflow:visible" width="18" height="18" viewBox="0 0 18 18"><path d="M0 5l4-3v2h3v2H4v2z" fill="#3f74bb"/><text x="9" y="7" font-family="Open Sans" font-size="8" fill="#333">,0</text><text x="5" y="17" font-family="Open Sans" font-size="8" fill="#333">,00</text></svg>
            <svg style="margin-left:7px;overflow:visible" width="18" height="18" viewBox="0 0 18 18"><text x="5" y="7" font-family="Open Sans" font-size="8" fill="#333">,00</text><path d="M7 14l-4-3v2H0v2h3v2z" fill="#3f74bb"/><text x="9" y="17" font-family="Open Sans" font-size="8" fill="#333">,0</text></svg>
          </div>
        </div>
        <div class="glabel"><span>Numeri</span>${launcher}</div>
      </div>

      <div class="group" style="flex:1;border-right:0">
        <div class="body">
          <div class="big" style="width:87px">${icons.condfmt}<span>Formattazione</span><span>condizionale ${arrow}</span></div>
          <div class="big" style="width:78px;margin-left:-2px">${icons.tablefmt}<span>Formatta</span><span>come tabella ${arrow}</span></div>
          <div class="gal">
            <div class="st st-normal">Normale</div>
            <div class="st st-neut">Neutrale</div>
            <div class="st st-bad">Valore n</div>
            <div class="st st-link">Cella collegata</div>
            <div class="st st-check">Cella da cont...</div>
            <div class="st st-input">Input</div>
          </div>
        </div>
        <div class="glabel" style="padding-right:0"><span style="padding-left:348px;padding-right:0;text-align:left">Stili</span></div>
      </div>
    </div>`;
  }

  render() {
    const tabs = ["Inserisci","Layout di pagina","Formule","Dati","Revisione","Visualizza","Sviluppo","Acrobat","Team"];
    return html`
      <div class="top">
        <div class="qat">
          ${icons.excel}<div class="qsep" style="margin:0 11px 0 4px"></div>
          ${icons.page}<div class="qsep"></div>
          ${icons.save}<span style="width:6px;flex:none"></span>${icons.saveas}<div class="qsep" style="margin:0 7px 0 6px"></div>
          ${icons.undo}<span class="qarr">${arrow}</span>${icons.redo}<span class="qarr">${arrow}</span>
          <div class="qsep" style="margin:0 6px 0 1px"></div><span class="ic" style="margin-bottom:2px">${icons.qat}</span>
          <div class="title">OnShore_Final_ELABORATO.xlsx  -  Microsoft Excel</div>
        </div>
        <div class="tabs">
          <div class="file">File</div>
          <div class="home">Home</div>
          <div class="tablist">${tabs.map((t) => html`<span>${t}</span>`)}</div>
        </div>
      </div>
      ${this.ribbon()}
      <div class="fbar">
        <div class="fleft">
          <div class="ftop">
            <div class="name">AI24</div>
            ${arrow}
            <div class="pill"><span class="dot"></span></div>
            <span class="fx">fx</span>
          </div>
        </div>
        <div class="finput">=CU24</div>
      </div>
      <div class="gap"></div>
      ${this.sheetView()}
    `;
  }
}
